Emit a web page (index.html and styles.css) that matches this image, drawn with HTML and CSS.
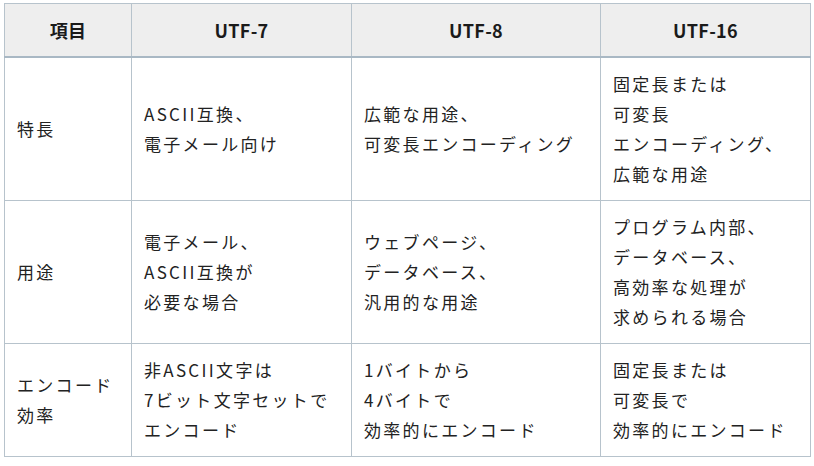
FILE: index.html
```html
<!DOCTYPE html>
<html lang="ja">
<head>
<meta charset="utf-8">
<link rel="stylesheet" href="styles.css">
</head>
<body>
<table class="cmp">
  <colgroup>
    <col class="c1"><col class="c2"><col class="c3"><col class="c4">
  </colgroup>
  <thead>
    <tr><th>項目</th><th>UTF-7</th><th>UTF-8</th><th>UTF-16</th></tr>
  </thead>
  <tbody>
    <tr>
      <td>特長</td>
      <td>ASCII互換、<br>電子メール向け</td>
      <td>広範な用途、<br>可変長エンコーディング</td>
      <td>固定長または<br>可変長<br>エンコーディング、<br>広範な用途</td>
    </tr>
    <tr>
      <td>用途</td>
      <td>電子メール、<br>ASCII互換が<br>必要な場合</td>
      <td>ウェブページ、<br>データベース、<br>汎用的な用途</td>
      <td>プログラム内部、<br>データベース、<br>高効率な処理が<br>求められる場合</td>
    </tr>
    <tr>
      <td>エンコード<br>効率</td>
      <td>非ASCII文字は<br>7ビット文字セットで<br>エンコード</td>
      <td>1バイトから<br>4バイトで<br>効率的にエンコード</td>
      <td>固定長または<br>可変長で<br>効率的にエンコード</td>
    </tr>
  </tbody>
</table>
</body>
</html>
```
FILE: styles.css
```css
html, body {
  margin: 0;
  background: #ffffff;
}
body {
  padding: 3px 0 0 4px;
  font-family: "Noto Sans CJK JP", "Noto Sans", sans-serif;
  color: #222222;
}
.cmp {
  border-collapse: collapse;
  table-layout: fixed;
  width: 806px;
  font-size: 17px;
  line-height: 30px;
  letter-spacing: 2.3px;
}
.c1 { width: 127px; }
.c2 { width: 220px; }
.c3 { width: 249px; }
.c4 { width: 210px; }
.cmp th, .cmp td {
  border: 1px solid #b7c3cc;
  padding: 11px 12px;
  vertical-align: middle;
  text-align: left;
  white-space: nowrap;
}
.cmp th {
  background: #eeeeee;
  font-weight: 700;
  color: #1a1a1a;
  text-align: center;
  letter-spacing: 0.3px;
  font-size: 18px;
}
.cmp thead tr th {
  border-bottom: 2px solid #a9b8c4;
}
```
